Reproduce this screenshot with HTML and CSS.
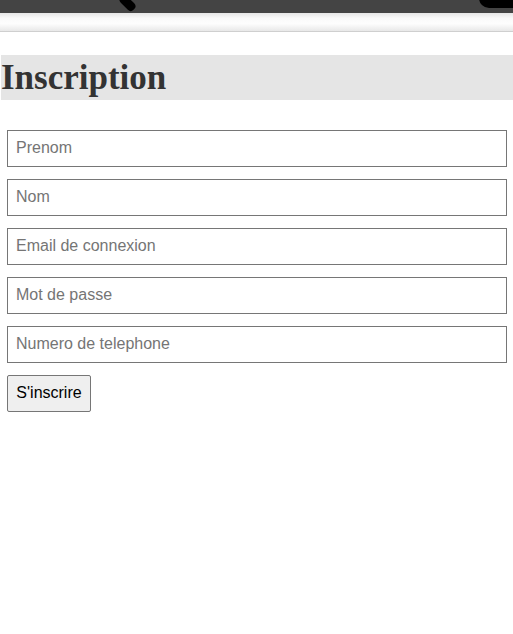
FILE: index.html
```html
<!DOCTYPE html>
<html lang="fr">

<head>
  <meta charset="UTF-8">
  <meta name="viewport" content="width=device-width, initial-scale=1.0">
  <title>Inscription</title>
  <link rel="stylesheet" href="styles.css">
</head>

<body>
  <div class="topbar">
    <span class="notch"></span>
    <span class="corner"></span>
  </div>
  <div class="toolbar"></div>

  <h1 class="title">Inscription</h1>

  <form class="mainform" id="signupForm">
    <input type="text" name="prenom" placeholder="Prenom">
    <input type="text" name="nom" placeholder="Nom">
    <input type="email" name="email" placeholder="Email de connexion">
    <input type="password" name="password" placeholder="Mot de passe">
    <input type="text" name="telephone" placeholder="Numero de telephone">
    <div>
      <input type="submit" value="S'inscrire">
    </div>
  </form>
</body>

</html>
```

FILE: styles.css
```css
body {
  margin: 0;
  font-family: "Liberation Sans", Arial, sans-serif;
  background-color: #fff;
}

.topbar {
  position: relative;
  height: 13px;
  background-color: #444;
  overflow: hidden;
}

.notch {
  position: absolute;
  left: 123px;
  top: -6px;
  width: 9px;
  height: 18px;
  background-color: #000;
  border-radius: 4px;
  transform: rotate(-45deg);
}

.corner {
  position: absolute;
  right: -10px;
  top: -20px;
  width: 44px;
  height: 28px;
  background-color: #000;
  border-radius: 10px;
}

.toolbar {
  height: 18px;
  background: linear-gradient(#e6e6e6, #fafafa 30%, #fdfdfd 60%, #e8e8e8);
  border-bottom: 1px solid #cfcfcf;
}

.title {
  margin: 23px 0 0 1px;
  height: 45px;
  line-height: 45px;
  background-color: #e5e5e5;
  color: #333;
  font-family: "Liberation Serif", "Times New Roman", serif;
  font-size: 35px;
  font-weight: bold;
}

.mainform {
  display: flex;
  flex-direction: column;
  gap: 12px;
  padding: 30px 6px 0 7px;
}

input[type=text],
input[type=email],
input[type=password] {
  box-sizing: border-box;
  width: 500px;
  height: 37px;
  padding: 0 8px 2px;
  font-family: "Liberation Sans", Arial, sans-serif;
  font-size: 16px;
  color: #000;
  border: 1px solid #767676;
  border-radius: 0;
  margin: 0;
}

input::placeholder {
  color: #757575;
}

input[type=submit] {
  box-sizing: border-box;
  height: 37px;
  width: 84px;
  margin: 0;
  padding: 0 0 2px;
  font-family: "Liberation Sans", Arial, sans-serif;
  font-size: 16px;
  color: #000;
  background-color: #efefef;
  border: 1px solid #767676;
  border-radius: 2px;
}
```
